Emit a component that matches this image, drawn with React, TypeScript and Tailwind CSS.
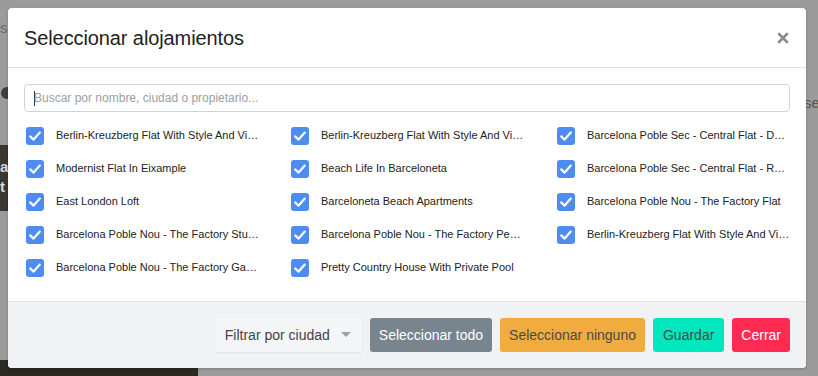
import { useState } from "react";

const ITEMS = [
  "Berlin-Kreuzberg Flat With Style And View",
  "Berlin-Kreuzberg Flat With Style And View II",
  "Barcelona Poble Sec - Central Flat - Duplex",
  "Modernist Flat In Eixample",
  "Beach Life In Barceloneta",
  "Barcelona Poble Sec - Central Flat - Rooftop",
  "East London Loft",
  "Barceloneta Beach Apartments",
  "Barcelona Poble Nou - The Factory Flat",
  "Barcelona Poble Nou - The Factory Studio",
  "Barcelona Poble Nou - The Factory Penthouse",
  "Berlin-Kreuzberg Flat With Style And Views III",
  "Barcelona Poble Nou - The Factory Garden",
  "Pretty Country House With Private Pool",
];

function Check({ on, onClick }: { on: boolean; onClick: () => void }) {
  return (
    <button
      onClick={onClick}
      className={`w-[18px] h-[18px] rounded-[3px] flex items-center justify-center shrink-0 ${
        on ? "bg-[#4e8cf1]" : "bg-white border border-[#bbb]"
      }`}
    >
      {on && (
        <svg viewBox="0 0 18 18" className="w-[18px] h-[18px]">
          <polyline
            points="4.2,9.4 7.6,12.6 13.8,5.6"
            fill="none"
            stroke="white"
            strokeWidth="2.2"
            strokeLinecap="round"
            strokeLinejoin="round"
          />
        </svg>
      )}
    </button>
  );
}

export default function App() {
  const [checked, setChecked] = useState<boolean[]>(ITEMS.map(() => true));

  const toggle = (i: number) =>
    setChecked((prev) => prev.map((v, j) => (j === i ? !v : v)));

  return (
    <div className="relative w-[818px] h-[376px] overflow-hidden bg-[#9b9b9b] font-['Liberation_Sans',Arial,sans-serif]">
      {/* página de fondo bajo el overlay */}
      <span className="absolute left-0 top-[17px] text-[15px] text-[#6a6a6a]">s</span>
      <span className="absolute left-[1px] top-[87px] w-[12px] h-[12px] rounded-full bg-[#3d3d3d]"></span>
      <div className="absolute left-0 top-[145px] w-[20px] h-[66px] bg-[#3b3733]">
        <p className="text-[15px] font-bold text-[#d8d8d8] leading-[20px] pt-[12px]">a</p>
        <p className="text-[15px] font-bold text-[#d8d8d8] leading-[20px]">t</p>
      </div>
      <div className="absolute left-0 top-[360px] w-[198px] h-[16px] bg-[#2c2925]"></div>
      <span className="absolute left-[804px] top-[92px] text-[15px] text-[#555]">se</span>

      {/* modal */}
      <div className="absolute left-[8px] top-[8px] w-[798px] h-[360px] bg-white rounded-[4px] flex flex-col overflow-hidden shadow-[0_1px_3px_rgba(0,0,0,0.2)]">
        <div className="h-[60px] shrink-0 px-4 flex items-center justify-between border-b border-[#e3e3e3]">
          <h1 className="text-[20px] text-[#222] tracking-[-0.1px]">Seleccionar alojamientos</h1>
          <button className="text-[#8c8c8c] mr-[1px]">
            <svg viewBox="0 0 12 12" className="w-[12px] h-[12px]">
              <path d="M2 2 L10 10 M10 2 L2 10" stroke="currentColor" strokeWidth="2.6" strokeLinecap="round" />
            </svg>
          </button>
        </div>

        <div className="flex-1 px-4 pt-4">
          <div className="h-[28px] border border-[#cfd4da] rounded-[4px] flex items-center pl-[9px] text-[12px] text-[#9aa0a6]">
            <span className="w-[1px] h-[15px] bg-[#333] mr-[-1px]"></span>
            <span>Buscar por nombre, ciudad o propietario...</span>
          </div>

          <div className="grid grid-cols-[265px_266px_1fr] auto-rows-[33px] mt-[7px] pl-[2px]">
            {ITEMS.map((name, i) => (
              <div key={i} className="flex items-center gap-3">
                <Check on={checked[i]} onClick={() => toggle(i)} />
                <span className="w-[203px] truncate text-[11px] text-[#222]">{name}</span>
              </div>
            ))}
          </div>
        </div>

        <div className="h-[67px] shrink-0 bg-[#f1f2f4] border-t border-[#e0e0e0] flex items-center justify-end gap-2 px-4 text-[14px]">
          <button className="h-[34px] w-[147px] px-[10px] rounded-[3px] bg-[#f4f5f7] shadow-[0_1px_2px_rgba(0,0,0,0.08)] flex items-center justify-between text-[#444]">
            <span>Filtrar por ciudad</span>
            <svg viewBox="0 0 10 6" className="w-[10px] h-[6px] mr-[1px]">
              <polygon points="0,0 10,0 5,5" fill="#a0a0a0" />
            </svg>
          </button>
          <button className="h-[34px] px-[9px] rounded-[3px] bg-[#78848e] text-white">Seleccionar todo</button>
          <button className="h-[34px] px-[9px] rounded-[3px] bg-[#f0ac3e] text-[#4a4a4a]">Seleccionar ninguno</button>
          <button className="h-[34px] px-[10px] rounded-[3px] bg-[#00e6bf] text-[#4a4a4a]">Guardar</button>
          <button className="h-[34px] px-[9px] rounded-[3px] bg-[#ff2b52] text-white">Cerrar</button>
        </div>
      </div>
    </div>
  );
}
